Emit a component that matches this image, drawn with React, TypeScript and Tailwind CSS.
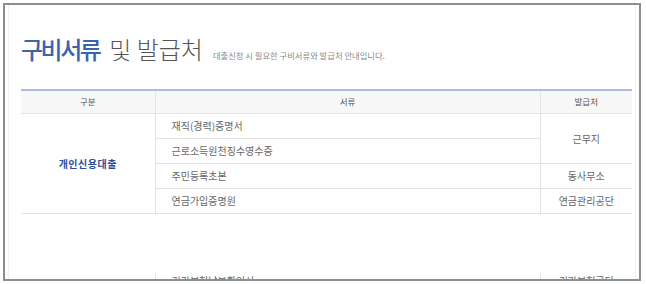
import React from "react";

const font = { fontFamily: '"Noto Sans CJK KR", "Noto Sans", sans-serif' };

export default function App() {
  const docs = [
    { name: "재직(경력)증명서" },
    { name: "근로소득원천징수영수증" },
    { name: "주민등록초본", org: "동사무소" },
    { name: "연금가입증명원", org: "연금관리공단" },
  ];
  return (
    <div className="w-[646px] h-[284px] bg-white pt-[3px] pl-[3px]" style={font}>
      <div className="w-[638px] h-[278px] border-2 border-[#8e8e8e] overflow-hidden">
        <div className="mx-[3px] h-full border-x border-[#f1f1f1] pl-[12px] pt-[29px]">
          <div className="flex items-end h-[27px]">
            <span className="text-[24px] leading-[24px] tracking-[-2.5px] text-[#3d63ad] font-medium">구비서류</span>
            <span className="ml-[10px] text-[24px] leading-[24px] tracking-[0px] text-[#555] font-light whitespace-pre">및 발급처</span>
            <span className="ml-[10px] mb-[1px] text-[8.3px] leading-[10px] text-[#8a8a8a]">대출신청 시 필요한 구비서류와 발급처 안내입니다.</span>
          </div>
          <table className="mt-[28px] w-[611px] border-collapse table-fixed border-t-2 border-[#a9bbdf]">
            <colgroup>
              <col className="w-[134px]" />
              <col className="w-[385px]" />
              <col className="w-[92px]" />
            </colgroup>
            <thead>
              <tr className="h-[23px] bg-[#f7f7f7] text-[8.5px] text-[#555]">
                <th className="font-normal border-b border-[#e3e3e3] border-r">구분</th>
                <th className="font-normal border-b border-[#e3e3e3] border-r">서류</th>
                <th className="font-normal border-b border-[#e3e3e3]">발급처</th>
              </tr>
            </thead>
            <tbody className="text-[10px] text-[#666]">
              {docs.map((d, i) => (
                <tr key={i} className="h-[25px]">
                  {i === 0 && (
                    <td rowSpan={4} className="text-center font-bold text-[#2b4e99] tracking-[0.5px] border-b border-r border-[#e3e3e3]">
                      개인신용대출
                    </td>
                  )}
                  <td className="pl-[16px] border-b border-r border-[#e3e3e3]">{d.name}</td>
                  {i === 0 && (
                    <td rowSpan={2} className="text-center border-b border-[#e3e3e3]">근무지</td>
                  )}
                  {i >= 2 && <td className="text-center border-b border-[#e3e3e3]">{d.org}</td>}
                </tr>
              ))}
            </tbody>
          </table>
          <table className="mt-[59px] w-[611px] border-collapse table-fixed">
            <colgroup>
              <col className="w-[134px]" />
              <col className="w-[385px]" />
              <col className="w-[92px]" />
            </colgroup>
            <tbody className="text-[10px] leading-[15px] text-[#666]">
              <tr className="h-[25px]">
                <td className="border-r border-[#e3e3e3]"></td>
                <td className="pl-[16px] align-top pt-0 border-r border-[#e3e3e3]">건강보험납부확인서</td>
                <td className="text-center align-top pt-0">건강보험공단</td>
              </tr>
            </tbody>
          </table>
        </div>
      </div>
    </div>
  );
}
